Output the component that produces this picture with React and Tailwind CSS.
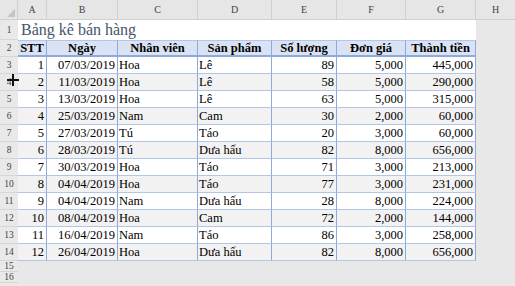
import React from "react";

const cols = ["A", "B", "C", "D", "E", "F", "G", "H"];
const widths = ["w-[29px]", "w-[71px]", "w-[80px]", "w-[74px]", "w-[65px]", "w-[69px]", "w-[70px]"];

const data = [
  [1, "07/03/2019", "Hoa", "Lê", 89, "5,000", "445,000"],
  [2, "11/03/2019", "Hoa", "Lê", 58, "5,000", "290,000"],
  [3, "13/03/2019", "Hoa", "Lê", 63, "5,000", "315,000"],
  [4, "25/03/2019", "Nam", "Cam", 30, "2,000", "60,000"],
  [5, "27/03/2019", "Tú", "Táo", 20, "3,000", "60,000"],
  [6, "28/03/2019", "Tú", "Dưa hấu", 82, "8,000", "656,000"],
  [7, "30/03/2019", "Hoa", "Táo", 71, "3,000", "213,000"],
  [8, "04/04/2019", "Hoa", "Táo", 77, "3,000", "231,000"],
  [9, "04/04/2019", "Nam", "Dưa hấu", 28, "8,000", "224,000"],
  [10, "08/04/2019", "Hoa", "Cam", 72, "2,000", "144,000"],
  [11, "16/04/2019", "Nam", "Táo", 86, "3,000", "258,000"],
  [12, "26/04/2019", "Hoa", "Dưa hấu", 82, "8,000", "656,000"],
];

const headers = ["STT", "Ngày", "Nhân viên", "Sản phẩm", "Số lượng", "Đơn giá", "Thành tiền"];

function RowNum({ n, h }) {
  return (
    <div className={`w-[18px] shrink-0 ${h} flex items-center justify-center pt-[2px] text-[9.5px] leading-none text-[#444] border-b border-[#d6d6d6] bg-[#e9e9e9]`}>
      {n}
    </div>
  );
}

export default function App() {
  return (
    <div
      className="relative w-[515px] h-[286px] overflow-hidden bg-[#e8e8e8] text-black"
      style={{ fontFamily: '"Liberation Serif", "Times New Roman", serif' }}
    >
      {/* column header */}
      <div className="flex h-[20px] border-b border-[#d0d0d0] bg-[#e6e6e6]">
        <div className="w-[18px] shrink-0 relative border-r border-[#d0d0d0]">
          <svg className="absolute right-[2px] bottom-[2px]" width="8" height="8" viewBox="0 0 8 8">
            <polygon points="8,0 8,8 0,8" fill="#c4c4c4" />
          </svg>
        </div>
        {widths.map((w, i) => (
          <div key={i} className={`${w} shrink-0 flex items-center justify-center text-[10px] text-[#444] border-r border-[#d0d0d0]`}>
            {cols[i]}
          </div>
        ))}
        <div className="flex-1 flex items-center justify-center text-[10px] text-[#444]">H</div>
      </div>

      {/* row 1 title */}
      <div className="flex">
        <RowNum n={1} h="h-[20px]" />
        <div className="w-[458px] shrink-0 h-[20px] bg-white flex items-end pl-[3px] text-[16px] leading-[20px] text-[#44546a]">
          Bảng kê bán hàng
        </div>
        <div className="flex-1" />
      </div>

      {/* row 2 header */}
      <div className="flex">
        <RowNum n={2} h="h-[17px]" />
        <div className="flex bg-white">
          {headers.map((t, i) => (
            <div
              key={i}
              className={`${widths[i]} shrink-0 h-[17px] flex items-center justify-center font-bold text-[12.5px] leading-none bg-[#dae3f3] border-r border-[#8ea9db] border-b-2 border-b-[#8ea9db] border-t border-t-[#b4c6e7]`}
            >
              {t}
            </div>
          ))}
        </div>
        <div className="flex-1" />
      </div>

      {/* data rows */}
      {data.map((row, r) => (
        <div key={r} className="flex">
          <RowNum n={r + 3} h="h-[17px]" />
          <div className="flex">
            {row.map((v, i) => (
              <div
                key={i}
                className={`${widths[i]} shrink-0 h-[17px] flex items-center ${i === 2 || i === 3 ? "justify-start pl-[1px]" : "justify-end pr-[2px]"} text-[12.5px] leading-none border-r border-[#8ea9db] border-b border-b-[#b4c6e7] ${r % 2 === 0 ? "bg-white" : "bg-[#f2f2f2]"}`}
              >
                {v}
              </div>
            ))}
          </div>
          <div className="flex-1" />
        </div>
      ))}

      {/* rows 15, 16 */}
      <div className="flex">
        <RowNum n={15} h="h-[11px]" />
      </div>
      <div className="flex">
        <RowNum n={16} h="h-[11px]" />
      </div>

      {/* cursor */}
      <svg className="absolute left-[7px] top-[74px]" width="12" height="12" viewBox="0 0 12 12">
        <rect x="5" y="0" width="2" height="12" fill="#111" />
        <rect x="0" y="5" width="12" height="2" fill="#111" />
      </svg>
    </div>
  );
}
